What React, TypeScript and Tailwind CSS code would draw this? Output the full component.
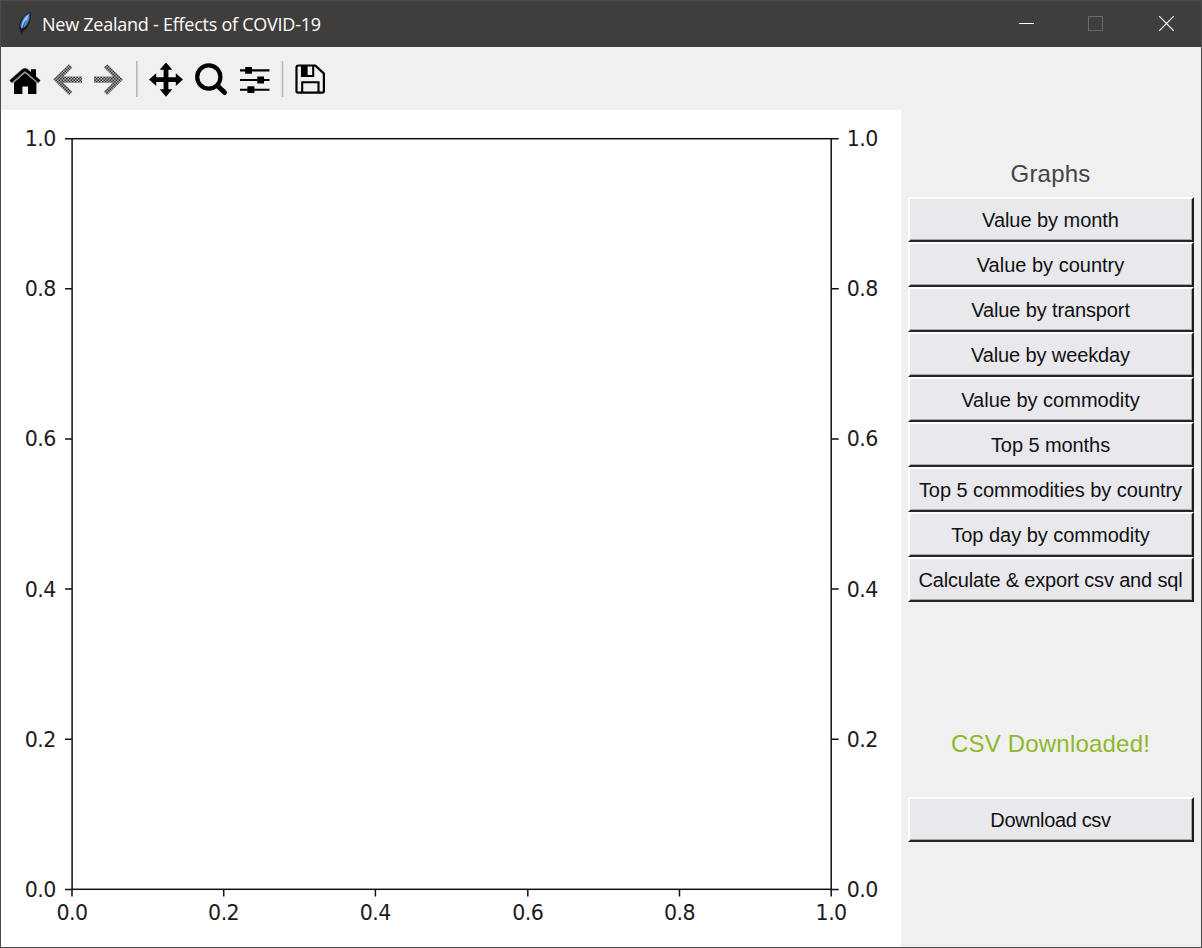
import React from "react";

const graphButtons = [
  { label: "Value by month", spacing: "tracking-[-0.05px]" },
  { label: "Value by country", spacing: "tracking-[0px]" },
  { label: "Value by transport", spacing: "tracking-[-0.12px]" },
  { label: "Value by weekday", spacing: "tracking-[-0.12px]" },
  { label: "Value by commodity", spacing: "tracking-[0px]" },
  { label: "Top 5 months", spacing: "tracking-[-0.08px]" },
  { label: "Top 5 commodities by country", spacing: "tracking-[-0.05px]" },
  { label: "Top day by commodity", spacing: "tracking-[-0.02px]" },
  { label: "Calculate & export csv and sql", spacing: "tracking-[-0.17px]" },
];

const ticks = [
  { label: "0.0", x: 72, y: 889.5 },
  { label: "0.2", x: 223.7, y: 739.3 },
  { label: "0.4", x: 375.4, y: 589.1 },
  { label: "0.6", x: 527.8, y: 438.9 },
  { label: "0.8", x: 679.5, y: 288.8 },
  { label: "1.0", x: 831.2, y: 138.7 },
];

function TkButton({ label, spacing }: { label: string; spacing: string }) {
  return (
    <button
      className={
        "flex h-[45px] w-[286px] items-center justify-center border-t-2 border-r-2 border-b-2 border-l-2 border-t-white border-r-[#1c1c1c] border-b-[#262626] border-l-white bg-[#e8e8ed] pt-px pr-px text-[20px] leading-[24px] whitespace-nowrap text-[#111] shadow-[inset_-1px_-1px_0_#a8a8aa] " +
        spacing
      }
    >
      {label}
    </button>
  );
}

function Feather() {
  return (
    <svg className="ml-[16px] h-[26px] w-[16px]" viewBox="0 0 16 26">
      <path d="M13.4 1.2 C8.6 2.2 3.2 8 2.4 13.6 C2 16.5 2.2 18.6 3.6 20 L4.6 24.4 L5.8 20.6 C9.6 18.5 12.6 13.5 13.6 8 C14 5 14.2 2.5 13.4 1.2Z" fill="#15181c" />
      <path d="M12.6 2.2 C8.4 3.6 4 9 3.4 14.6 L4.6 17.8 C9.4 16 11.8 11 12.6 7Z" fill="#4384cf" />
      <path d="M11.6 3.2 C7.6 6.4 4.8 11.6 4.4 17.4 L7.2 14 C9 10.8 10.8 7 11.6 3.2Z" fill="#a5cdf4" />
      <path d="M8.6 9.6 C6.8 13.4 5.4 17 4.8 22.6" fill="none" stroke="#20252b" strokeWidth=".8" />
    </svg>
  );
}

function ToolbarIcons() {
  return (
    <svg className="h-[63px] w-[340px]" viewBox="0 47 340 63">
      <defs>
        <pattern id="stipple" width="3" height="3" patternUnits="userSpaceOnUse">
          <rect width="3" height="3" fill="#a8a8a8" />
          <rect width="1.5" height="1.5" fill="#373737" />
          <rect x="1.5" y="1.5" width="1.5" height="1.5" fill="#373737" />
        </pattern>
      </defs>

      <path d="M14 82.6 L25 73 L36.4 82.6 V94 H28 V86.6 H22.4 V94 H14Z" fill="#000" />
      <path d="M10.8 81.8 L23 71 Q25 69.4 27 71 L39.2 81.8" fill="none" stroke="#777" strokeWidth="4.4" />
      <path d="M10.6 81.4 L23 70.8 Q25 69 27 70.8 L39.4 81.4" fill="none" stroke="#000" strokeWidth="2.6" />
      <path d="M31 69.2 H36 V77.6 L31 73.4Z" fill="#000" />

      <path d="M53.2 79.5 L69 64.2 L72.3 67.4 L63.3 76.4 H82 V82.8 H63.3 L72.3 91.7 L69 95Z" fill="url(#stipple)" />
      <path d="M123 79.5 L107.2 64.2 L103.9 67.4 L112.9 76.4 H94 V82.8 H112.9 L103.9 91.7 L107.2 95Z" fill="url(#stipple)" />

      <path d="M136.8 61 V97" stroke="#b7b7b7" strokeWidth="1.6" />

      <path d="M166 62.4 L172.3 69.8 H168.4 V77.2 H175.8 V73.3 L183 79.6 L175.8 86 V82 H168.4 V89.3 H172.3 L166 96.7 L159.7 89.3 H163.6 V82 H156.2 V86 L149 79.6 L156.2 73.3 V77.2 H163.6 V69.8 H159.7Z" fill="#000" />

      <circle cx="208.8" cy="77" r="11.6" fill="none" stroke="#000" strokeWidth="4.2" />
      <path d="M217.5 85.8 L224.6 92.6" stroke="#000" strokeWidth="4.8" strokeLinecap="round" />

      <path d="M240 70.4 H269.5 M240 80 H269.5 M240 89.7 H269.5" stroke="#000" strokeWidth="2.1" />
      <path d="M245.2 67 h6.8 v6.8 h-6.8Z M257.2 76.6 h6.8 v6.8 h-6.8Z M247.4 86.3 h7 v6.8 h-7Z" fill="#000" />

      <path d="M282.5 61 V97" stroke="#b7b7b7" strokeWidth="1.6" />

      <path d="M298.5 65.5 H315.3 L323.9 73.6 V91 Q323.9 92.7 322.2 92.7 H298.2 Q296.5 92.7 296.5 91 V67.3 Q296.5 65.5 298.5 65.5Z" fill="none" stroke="#000" strokeWidth="2.2" />
      <path d="M302 66 V76 H313.2 V66" fill="none" stroke="#000" strokeWidth="2.1" />
      <path d="M302 66 H307.6 V76 H302Z" fill="#000" />
      <path d="M302.2 92 V82.3 H318.5 V92" fill="none" stroke="#000" strokeWidth="2.1" />
    </svg>
  );
}

function Chart() {
  return (
    <svg
      className="h-[837px] w-[900px] shrink-0 bg-white"
      viewBox="1 110 900 837"
      fontFamily="'DejaVu Sans', sans-serif"
      fontSize="20.6"
      fill="#1c1c1c"
    >
      <rect x="72.1" y="138.7" width="759.1" height="750.6" fill="none" stroke="#111" strokeWidth="1.5" />
      {ticks.map((t) => (
        <g key={t.label}>
          <path
            d={`M65 ${t.y} H72 M831 ${t.y} H838.7 M${t.x} 889 V896.5`}
            stroke="#111"
            strokeWidth="1.5"
            fill="none"
          />
          <text x="24.8" y={t.y + 7.5} textLength="31.6">{t.label}</text>
          <text x="846.8" y={t.y + 7.5} textLength="31.6">{t.label}</text>
          <text x={t.x - 15.6} y="920" textLength="31.6">{t.label}</text>
        </g>
      ))}
    </svg>
  );
}

export default function App() {
  return (
    <div className="flex h-[948px] w-[1202px] flex-col overflow-hidden border border-[#4b4b4a] bg-[#f0f0f0] font-['Liberation_Sans',Arial,sans-serif]">
      <header className="flex h-[46px] shrink-0 items-center bg-[#3f3e3c] text-white">
        <Feather />
        <h1 className="ml-[9px] font-['Open_Sans','Noto_Sans',sans-serif] text-[18px] leading-[24px] font-normal tracking-[-0.25px] whitespace-nowrap">
          New Zealand - Effects of COVID-19
        </h1>
        <svg className="ml-auto h-[46px] w-[210px]" viewBox="991 1 210 46" fill="none">
          <path d="M1019 23.5 H1034" stroke="#fff" />
          <rect x="1088.5" y="16.5" width="14" height="14" stroke="#6b6a69" />
          <path d="M1159.2 16.2 L1173.8 30.8 M1173.8 16.2 L1159.2 30.8" stroke="#fff" strokeWidth="1.2" />
        </svg>
      </header>
      <div className="-ml-px h-[63px] shrink-0">
        <ToolbarIcons />
      </div>
      <main className="flex h-[837px] shrink-0">
        <Chart />
        <aside className="flex w-[300px] flex-col items-start pl-[7px]">
          <h2 className="mt-[48px] flex h-[39px] w-[285px] justify-center text-[24px] leading-[32px] tracking-[0.2px] text-[#444]">
            Graphs
          </h2>
          {graphButtons.map((b) => (
            <TkButton key={b.label} label={b.label} spacing={b.spacing} />
          ))}
          <p className="mt-[126px] flex h-[69px] w-[285px] justify-center text-[24px] leading-[32px] tracking-[0.2px] whitespace-nowrap text-[#8fb82b]">
            CSV Downloaded!
          </p>
          <TkButton label="Download csv" spacing="tracking-[-0.35px]" />
        </aside>
      </main>
    </div>
  );
}
